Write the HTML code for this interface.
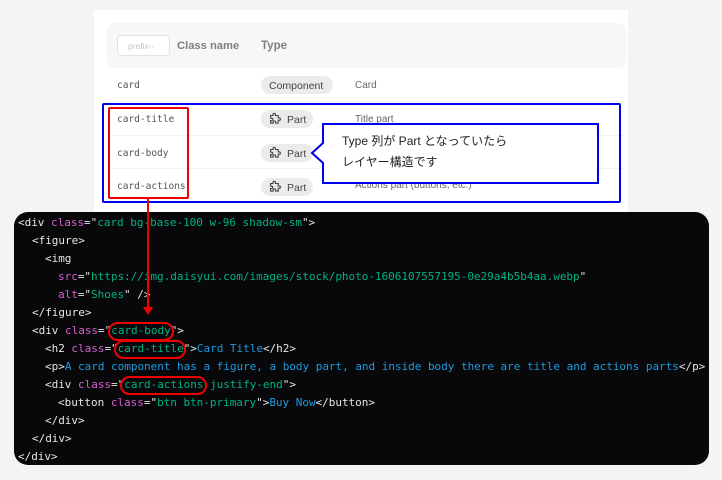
<!DOCTYPE html>
<html lang="ja">
<head>
<meta charset="utf-8">
<style>
html,body{margin:0;padding:0;width:722px;height:480px;overflow:hidden;background:#fff;}
body{position:relative;font-family:"Liberation Sans","Noto Sans CJK JP",sans-serif;}
.a{position:absolute;box-sizing:border-box;}
.t{position:absolute;white-space:nowrap;line-height:16px;}
.m{font-family:"DejaVu Sans Mono","Liberation Mono",monospace;font-size:9.5px;color:#555;}
.badge{position:absolute;box-sizing:border-box;background:#ebebeb;border-radius:9px;height:18px;color:#444;font-size:10.5px;line-height:20px;}
.line{position:absolute;left:0;white-space:pre;font-family:"DejaVu Sans Mono","Liberation Mono",monospace;font-size:11px;letter-spacing:-0.02px;line-height:18px;height:18px;color:#e6e6e6;}
.p{color:#d65fd0}.s{color:#00b37e}.b{color:#1c9be0}
.sep{position:absolute;left:107px;width:519px;height:1px;background:#f3f3f3;}
</style>
</head>
<body>
<div class="a" style="left:0;top:0;width:722px;height:480px;background:#f4f4f4"></div>
<div class="a" style="left:94px;top:10px;width:534px;height:203px;background:#fff"></div>
<div class="a" style="left:107px;top:23px;width:519px;height:45px;background:#f7f7f7;border-radius:8px"></div>
<div class="a" style="left:117px;top:35px;width:53px;height:21px;background:#fff;border:1px solid #e2e2e2;border-radius:4px"></div>
<div class="t" style="left:128px;top:38px;font-size:8.5px;color:#c4c4c4">prefix--</div>
<div class="t" style="left:177px;top:38px;font-size:11.2px;font-weight:bold;color:#808080">Class name</div>
<div class="t" style="left:261px;top:38px;font-size:11.5px;font-weight:bold;color:#808080">Type</div>

<div class="t m" style="left:117px;top:78px">card</div>
<div class="badge" style="left:261px;top:76px;width:72px;padding-left:8px">Component</div>
<div class="t" style="left:355px;top:78px;font-size:10px;color:#666">Card</div>

<div class="sep" style="top:101px"></div>
<div class="sep" style="top:135px"></div>
<div class="sep" style="top:168px"></div>

<div class="t m" style="left:117px;top:112px">card-title</div>
<div class="t m" style="left:117px;top:146px">card-body</div>
<div class="t m" style="left:117px;top:179px">card-actions</div>

<div class="badge" style="left:261px;top:110px;width:52px;padding-left:26px">Part</div>
<div class="badge" style="left:261px;top:144px;width:52px;padding-left:26px">Part</div>
<div class="badge" style="left:261px;top:178px;width:52px;padding-left:26px">Part</div>

<svg class="a" style="left:268px;top:112px" width="14" height="14" viewBox="0 0 14 14" fill="none" stroke="#444" stroke-width="1.100"><path d="M5 3.500V2.500a1.200 1.200 0 0 1 2.400 0v1h2.800v2.400h1a1.200 1.200 0 0 1 0 2.400h-1v2.800H7.600v-1a1.200 1.200 0 0 0-2.400 0v1H2.600V8.600h1a1.200 1.200 0 0 0 0-2.400h-1V3.500z"/></svg>
<svg class="a" style="left:268px;top:146px" width="14" height="14" viewBox="0 0 14 14" fill="none" stroke="#444" stroke-width="1.100"><path d="M5 3.500V2.500a1.200 1.200 0 0 1 2.400 0v1h2.800v2.400h1a1.200 1.200 0 0 1 0 2.400h-1v2.800H7.600v-1a1.200 1.200 0 0 0-2.400 0v1H2.600V8.600h1a1.200 1.200 0 0 0 0-2.400h-1V3.500z"/></svg>
<svg class="a" style="left:268px;top:180px" width="14" height="14" viewBox="0 0 14 14" fill="none" stroke="#444" stroke-width="1.100"><path d="M5 3.500V2.500a1.200 1.200 0 0 1 2.400 0v1h2.800v2.400h1a1.200 1.200 0 0 1 0 2.400h-1v2.800H7.600v-1a1.200 1.200 0 0 0-2.400 0v1H2.600V8.600h1a1.200 1.200 0 0 0 0-2.400h-1V3.500z"/></svg>

<div class="t" style="left:355px;top:112px;font-size:10px;color:#666">Title part</div>
<div class="t" style="left:355px;top:178px;font-size:10px;color:#666">Actions part (buttons, etc.)</div>

<!-- code panel -->
<div class="a" style="left:14px;top:212px;width:695px;height:253px;background:#08080b;border-radius:14px;overflow:hidden">
<div class="line" style="left:4px;top:2px">&lt;div <span class="p">class</span>=&quot;<span class="s">card bg-base-100 w-96 shadow-sm</span>&quot;&gt;</div>
<div class="line" style="left:18px;top:20px">&lt;figure&gt;</div>
<div class="line" style="left:31px;top:38px">&lt;img</div>
<div class="line" style="left:44px;top:56px"><span class="p">src</span>=&quot;<span class="s">https://img.daisyui.com/images/stock/photo-1606107557195-0e29a4b5b4aa.webp</span>&quot;</div>
<div class="line" style="left:44px;top:74px"><span class="p">alt</span>=&quot;<span class="s">Shoes</span>&quot; /&gt;</div>
<div class="line" style="left:18px;top:92px">&lt;/figure&gt;</div>
<div class="line" style="left:18px;top:110px">&lt;div <span class="p">class</span>=&quot;<span class="s">card-body</span>&quot;&gt;</div>
<div class="line" style="left:31px;top:128px">&lt;h2 <span class="p">class</span>=&quot;<span class="s">card-title</span>&quot;&gt;<span class="b">Card Title</span>&lt;/h2&gt;</div>
<div class="line" style="left:31px;top:146px">&lt;p&gt;<span class="b">A card component has a figure, a body part, and inside body there are title and actions parts</span>&lt;/p&gt;</div>
<div class="line" style="left:31px;top:164px">&lt;div <span class="p">class</span>=&quot;<span class="s">card-actions justify-end</span>&quot;&gt;</div>
<div class="line" style="left:44px;top:182px">&lt;button <span class="p">class</span>=&quot;<span class="s">btn btn-primary</span>&quot;&gt;<span class="b">Buy Now</span>&lt;/button&gt;</div>
<div class="line" style="left:31px;top:200px">&lt;/div&gt;</div>
<div class="line" style="left:18px;top:218px">&lt;/div&gt;</div>
<div class="line" style="left:4px;top:236px">&lt;/div&gt;</div>
</div>

<!-- annotations -->
<div class="a" style="left:102px;top:103px;width:519px;height:100px;border:2px solid #0000f0;border-radius:2px"></div>
<div class="a" style="left:108px;top:107px;width:81px;height:92px;border:2px solid #f00000;border-radius:2px"></div>
<svg class="a" style="left:0;top:0" width="722" height="480" fill="none">
<path d="M148 199V308" stroke="#f00000" stroke-width="2"/>
<path d="M143 307h10l-5 8z" fill="#f00000"/>
<rect x="109" y="323" width="64" height="17" rx="8.500" stroke="#f00000" stroke-width="2"/>
<rect x="115" y="341" width="70" height="17" rx="8.500" stroke="#f00000" stroke-width="2"/>
<rect x="121" y="377" width="85" height="17" rx="8.500" stroke="#f00000" stroke-width="2"/>
<path d="M323 124H598V183H323V163L312 153L323 143Z" fill="#fff" stroke="#0000f0" stroke-width="2"/>
</svg>
<div class="t" style="left:342px;top:133px;font-size:12px;color:#222">Type 列が Part となっていたら</div>
<div class="t" style="left:342px;top:154px;font-size:12px;color:#222">レイヤー構造です</div>
</body>
</html>
